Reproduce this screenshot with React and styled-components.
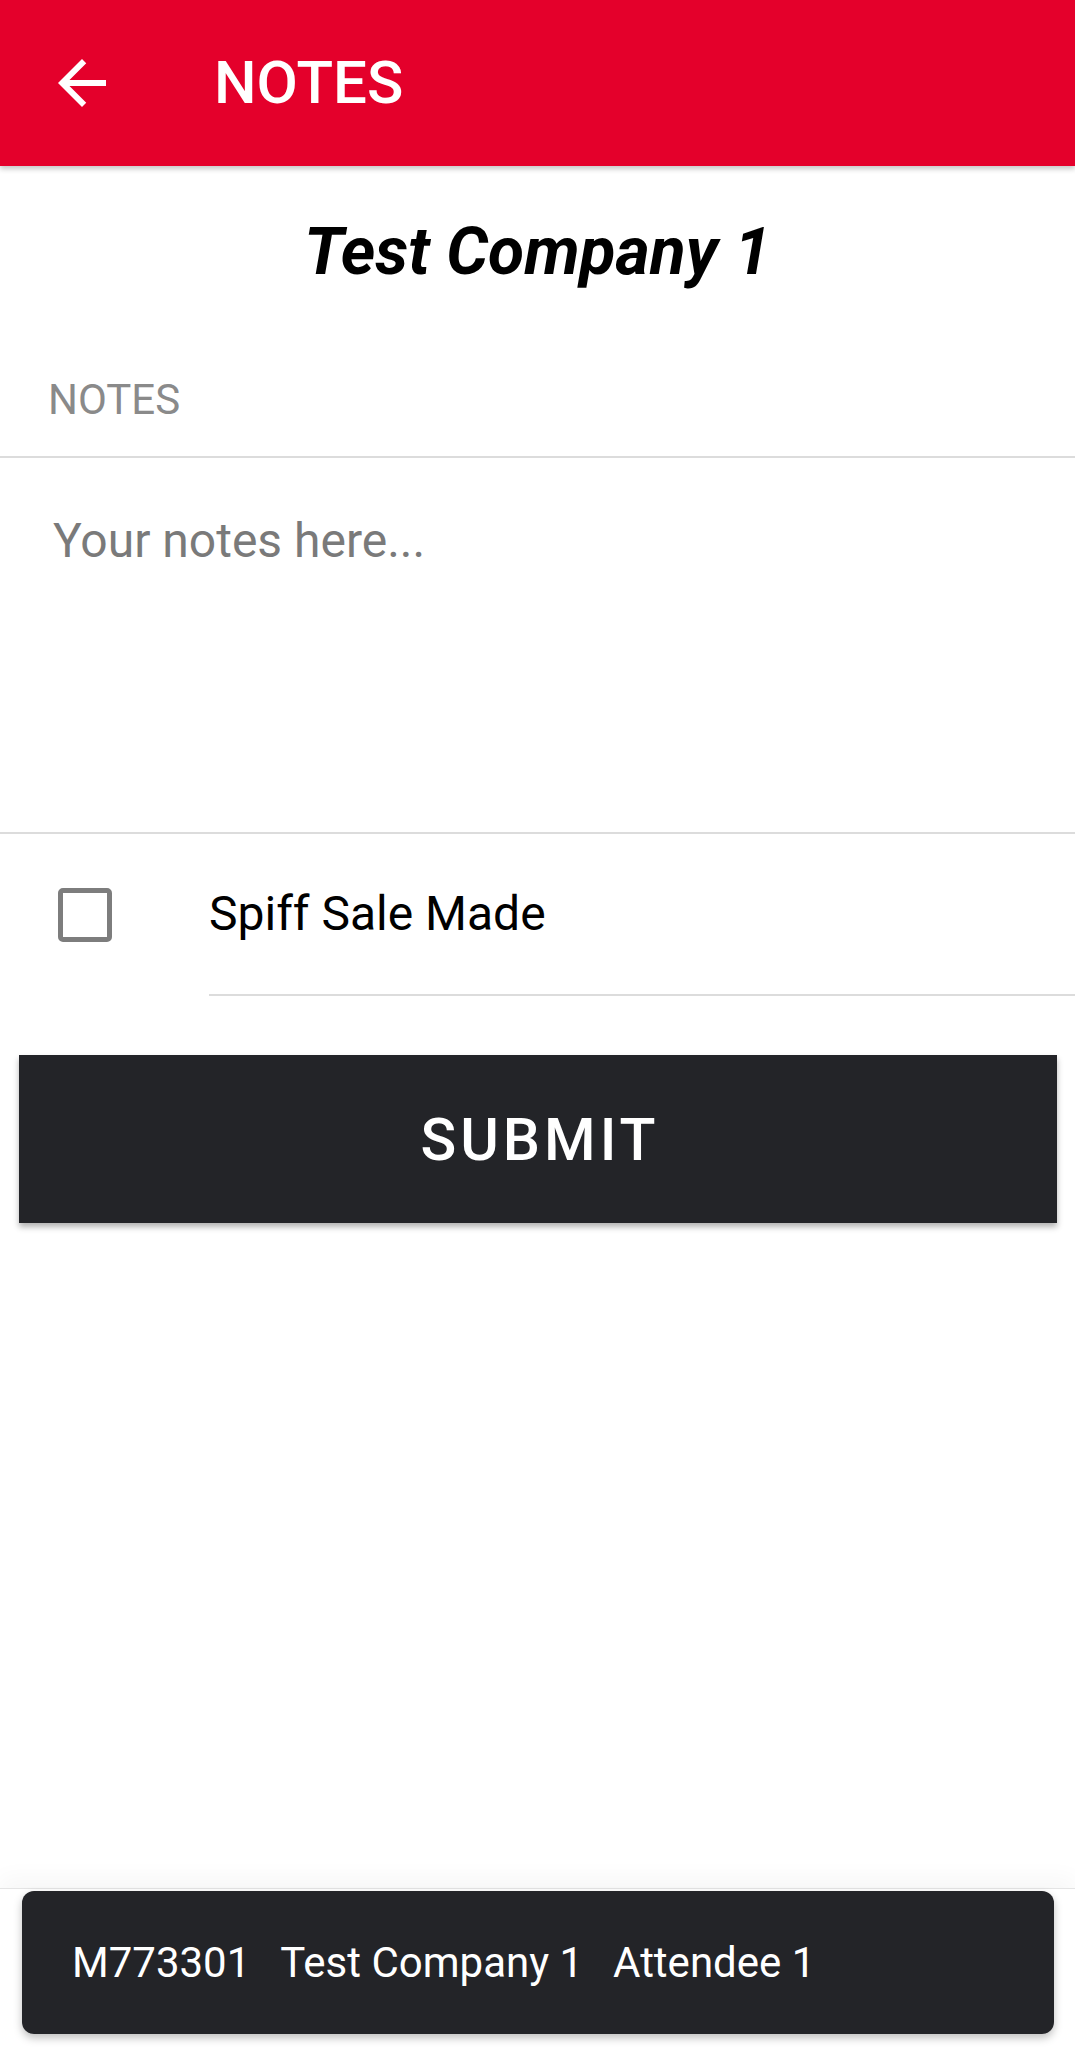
import React, { useState } from 'react';
import styled, { createGlobalStyle } from 'styled-components';

const GlobalStyle = createGlobalStyle`
  html, body {
    margin: 0;
    padding: 0;
    background: #ffffff;
    font-family: Roboto, "Noto Sans", "Liberation Sans", sans-serif;
  }
  * { box-sizing: border-box; }
`;

const Page = styled.div`
  display: flex;
  flex-direction: column;
  height: 2048px;
  background: #ffffff;
`;

const Header = styled.header`
  position: relative;
  z-index: 2;
  display: flex;
  align-items: center;
  height: 166px;
  padding-left: 46px;
  background: #e4002b;
  box-shadow: 0 3px 5px rgba(0, 0, 0, 0.22);
`;

const BackButton = styled.button`
  display: flex;
  width: 72px;
  height: 72px;
  padding: 0;
  border: none;
  background: transparent;
  color: #ffffff;
  cursor: pointer;
`;

const HeaderTitle = styled.h1`
  margin: 0 0 0 96px;
  font-size: 60px;
  font-weight: 500;
  line-height: 1;
  color: #ffffff;
`;

const Main = styled.main`
  flex: 1;
  display: flex;
  flex-direction: column;
`;

const CompanyName = styled.h2`
  margin: 46px 0 0;
  font-size: 66px;
  font-weight: 700;
  font-style: italic;
  line-height: 80px;
  text-align: center;
  color: #000000;
`;

const SectionLabel = styled.div`
  margin-top: 83px;
  padding: 0 48px 31px;
  font-size: 42px;
  line-height: 50px;
  color: #8a8a8a;
  border-bottom: 2px solid #dcdcdc;
`;

const NotesInput = styled.textarea`
  display: block;
  width: 100%;
  height: 376px;
  padding: 54px 53px;
  border: none;
  border-bottom: 2px solid #dcdcdc;
  resize: none;
  outline: none;
  font-family: inherit;
  font-size: 48px;
  line-height: 58px;
  color: #000000;

  &::placeholder {
    color: #7a7a7a;
  }
`;

const CheckRow = styled.label`
  display: flex;
  cursor: pointer;
`;

const CheckCell = styled.div`
  display: flex;
  align-items: center;
  width: 209px;
  padding-left: 58px;
`;

const CheckBox = styled.span`
  width: 54px;
  height: 54px;
  border: 5px solid #7d7d7d;
  border-radius: 5px;
  background: ${(p) => (p.$checked ? '#7d7d7d' : 'transparent')};
`;

const CheckLabel = styled.div`
  flex: 1;
  display: flex;
  align-items: center;
  height: 162px;
  border-bottom: 2px solid #dcdcdc;
  font-size: 48px;
  line-height: 58px;
  color: #000000;
`;

const HiddenInput = styled.input`
  display: none;
`;

const SubmitButton = styled.button`
  margin: 59px 18px 0 19px;
  height: 168px;
  border: none;
  background: #232428;
  color: #ffffff;
  font-family: inherit;
  font-size: 59px;
  font-weight: 500;
  letter-spacing: 4px;
  text-indent: 4px;
  box-shadow: 0 4px 6px rgba(0, 0, 0, 0.3);
  cursor: pointer;
`;

const Footer = styled.footer`
  padding: 2px 21px 14px 22px;
  border-top: 1px solid #e4e4e4;
  box-shadow: 0 -10px 22px rgba(0, 0, 0, 0.035);
`;

const InfoBar = styled.div`
  display: flex;
  align-items: center;
  gap: 30px;
  height: 143px;
  padding-left: 50px;
  border-radius: 12px;
  background: #232428;
  box-shadow: 0 4px 8px rgba(0, 0, 0, 0.25);
  color: #ffffff;
  font-size: 42px;
  line-height: 1;
`;

const ArrowBack = () => (
  <svg width="72" height="72" viewBox="0 0 24 24" fill="currentColor">
    <path d="M20 11H7.83l5.59-5.59L12 4l-8 8 8 8 1.41-1.41L7.83 13H20v-2z" />
  </svg>
);

const App = () => {
  const [notes, setNotes] = useState('');
  const [spiff, setSpiff] = useState(false);

  return (
    <Page>
      <GlobalStyle />
      <Header>
        <BackButton aria-label="Back">
          <ArrowBack />
        </BackButton>
        <HeaderTitle>NOTES</HeaderTitle>
      </Header>
      <Main>
        <CompanyName>Test Company 1</CompanyName>
        <SectionLabel>NOTES</SectionLabel>
        <NotesInput
          placeholder="Your notes here..."
          value={notes}
          onChange={(e) => setNotes(e.target.value)}
        />
        <CheckRow>
          <HiddenInput type="checkbox" checked={spiff} onChange={() => setSpiff(!spiff)} />
          <CheckCell>
            <CheckBox $checked={spiff} />
          </CheckCell>
          <CheckLabel>Spiff Sale Made</CheckLabel>
        </CheckRow>
        <SubmitButton>SUBMIT</SubmitButton>
      </Main>
      <Footer>
        <InfoBar>
          <span>M773301</span>
          <span>Test Company 1</span>
          <span>Attendee 1</span>
        </InfoBar>
      </Footer>
    </Page>
  );
};

export default App;
